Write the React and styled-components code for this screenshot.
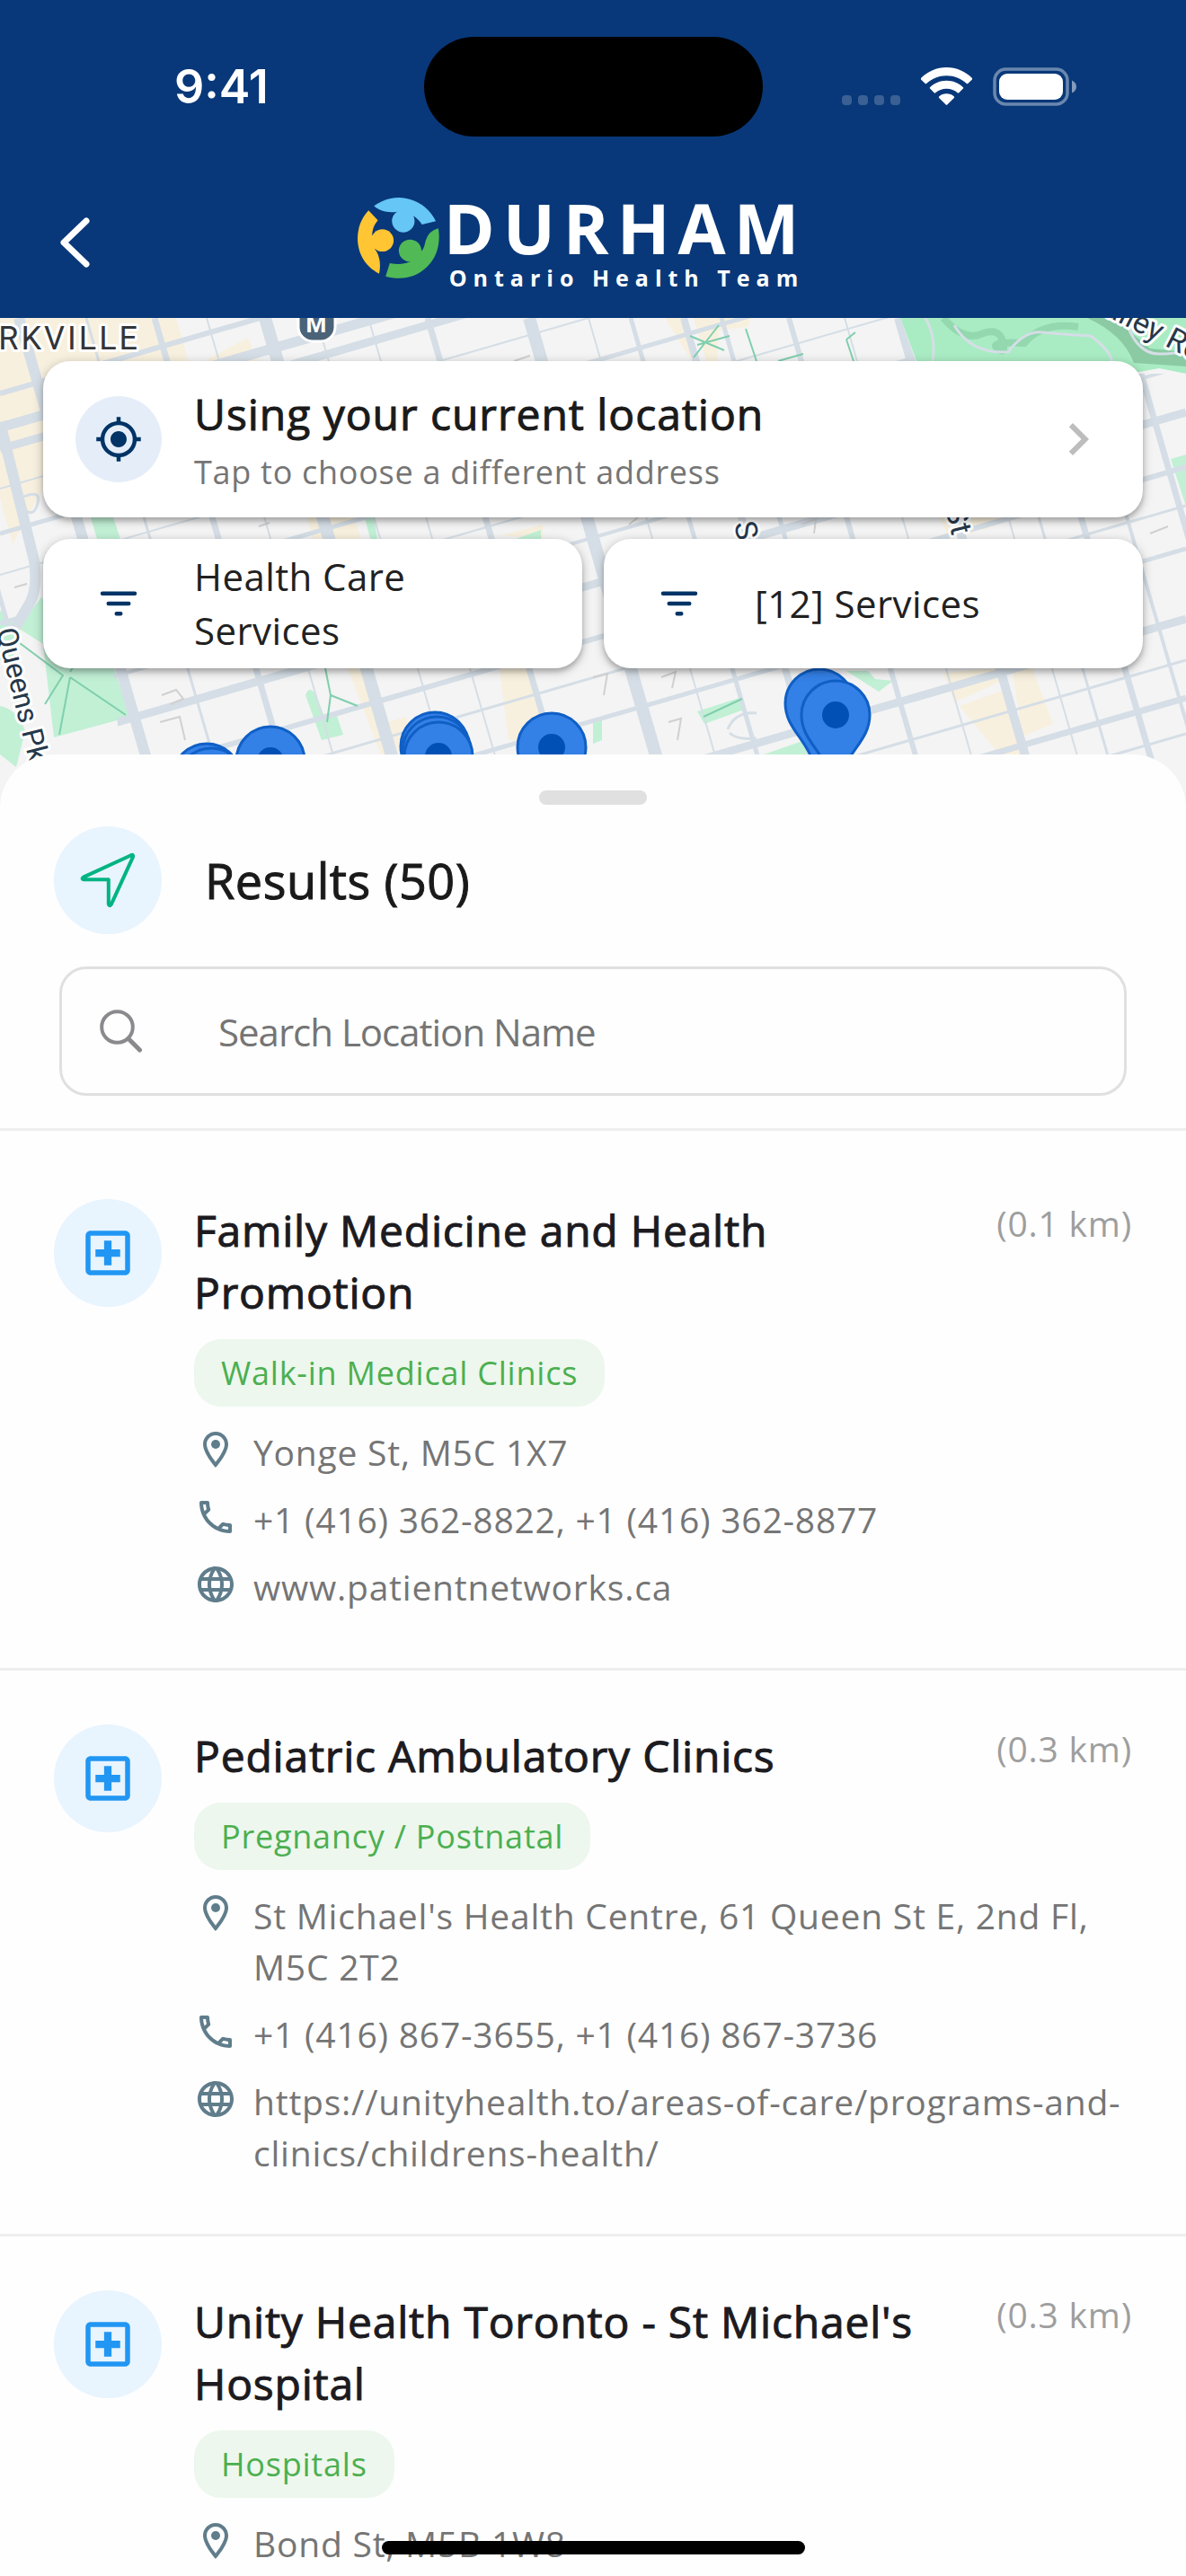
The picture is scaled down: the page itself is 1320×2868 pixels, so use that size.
import React from 'react';
import styled, { createGlobalStyle } from 'styled-components';
import {
  MdChevronRight,
  MdLanguage,
  MdMyLocation,
  MdOutlineLocalHospital,
  MdOutlineLocalPhone,
  MdOutlineLocationOn,
} from 'react-icons/md';

const GlobalStyle = createGlobalStyle`
  * {
    box-sizing: border-box;
  }

  body {
    margin: 0;
    font-family: 'Open Sans', 'Noto Sans', sans-serif;
    font-size: 39px;
    letter-spacing: 0.02em;
    color: #1c1b1f;
    background: #fefefe;
  }

  button,
  input {
    font: inherit;
    letter-spacing: inherit;
    color: inherit;
    border: 0;
    padding: 0;
    background: none;
  }

  h1,
  h2,
  h3,
  p,
  ul {
    margin: 0;
    padding: 0;
    list-style: none;
    font-weight: 400;
  }

  a {
    color: inherit;
    text-decoration: none;
  }

  svg {
    display: block;
    flex-shrink: 0;
  }
`;

const Screen = styled.div`
  height: 100vh;
  overflow: hidden;
  display: flex;
  flex-direction: column;
`;

/* header */

const Header = styled.header`
  flex-shrink: 0;
  background: #083879;
  color: #ffffff;
`;

const StatusBar = styled.div`
  display: grid;
  grid-template-columns: 1fr auto 1fr;
  align-items: center;
  padding: 41px 0 34px;
`;

const Clock = styled.time`
  padding-left: 194px;
  font-family: Inter, sans-serif;
  font-size: 52px;
  font-weight: 600;
  letter-spacing: 0;
`;

const Island = styled.div`
  width: 377px;
  height: 111px;
  border-radius: 56px;
  background: #000000;
`;

const StatusIcons = styled.div`
  display: flex;
  justify-content: flex-end;
  gap: 23px;
  padding-right: 122px;
`;

const NavBar = styled.div`
  display: flex;
  align-items: flex-start;
  height: 168px;
  padding: 33px 60px 0;
`;

const BackButton = styled.button`
  display: flex;
  align-items: center;
  width: 60px;
  height: 102px;
`;

const Brand = styled.div`
  flex: 1;
  display: flex;
  justify-content: center;
  gap: 5px;
`;

const BrandText = styled.div`
  padding-top: 5px;
  font-weight: 700;
`;

const BrandName = styled.h1`
  font-size: 77px;
  line-height: 60px;
  font-weight: 700;
  letter-spacing: 9px;
`;

const BrandTagline = styled.p`
  margin-top: 8px;
  padding-left: 6px;
  font-size: 25px;
  line-height: 34px;
  font-weight: 700;
  letter-spacing: 7px;
`;

const NavSpacer = styled.div`
  width: 84px;
`;

/* map */

const MapArea = styled.section`
  position: relative;
  flex-shrink: 0;
  height: 546px;
  overflow: hidden;
  background: #f4f4f4;
`;

const MapCanvas = styled.svg`
  position: absolute;
  inset: 0;
  width: 100%;
  height: 100%;
`;

const MapControls = styled.div`
  position: relative;
  display: grid;
  grid-template-columns: 1fr 1fr;
  gap: 24px;
  padding: 48px;
`;

const MapCard = styled.button`
  display: flex;
  align-items: center;
  gap: 36px;
  height: ${({ $wide }) => ($wide ? 174 : 144)}px;
  grid-column: ${({ $wide }) => ($wide ? '1 / -1' : 'auto')};
  padding: 0 36px;
  border-radius: 30px;
  background: #ffffff;
  text-align: left;
  box-shadow: 0 3px 12px rgba(0, 0, 0, 0.28), 0 4px 5px rgba(0, 0, 0, 0.14);
`;

const CardIcon = styled.span`
  display: flex;
  align-items: center;
  justify-content: center;
  flex-shrink: 0;
  width: 96px;
  height: 96px;
  border-radius: 50%;
  color: #003366;
  background: ${({ $filled }) => ($filled ? '#e5eef8' : 'transparent')};
`;

const CardText = styled.span`
  flex: 1;
  font-size: 42px;
  line-height: 60px;
  letter-spacing: 0.01em;
  color: #212121;
`;

const CardTitle = styled.strong`
  display: block;
  font-size: 48px;
  line-height: 72px;
  font-weight: 400;
  letter-spacing: 0.02em;
  color: #1a1a1a;
  -webkit-text-stroke: 1px currentColor;
`;

const CardHint = styled.span`
  display: block;
  font-size: 36px;
  line-height: 57px;
  letter-spacing: 0.02em;
  color: #757575;
`;

/* results sheet */

const Sheet = styled.main`
  position: relative;
  flex-shrink: 0;
  margin-top: -60px;
  padding-top: 40px;
  border-radius: 60px 60px 0 0;
  background: #fefefe;
`;

const Handle = styled.div`
  width: 120px;
  height: 16px;
  margin: 0 auto 24px;
  border-radius: 8px;
  background: #e0e0e0;
`;

const SheetHeader = styled.div`
  display: flex;
  align-items: center;
  gap: 48px;
  padding: 0 60px;
`;

const RoundIcon = styled.span`
  display: flex;
  align-items: center;
  justify-content: center;
  flex-shrink: 0;
  width: 120px;
  height: 120px;
  border-radius: 50%;
  color: #2196f3;
  background: #e8f4fe;
`;

const SheetTitle = styled.h2`
  font-size: 54px;
  letter-spacing: 0.01em;
  color: #1a1a1a;
  -webkit-text-stroke: 1px currentColor;
`;

const SearchBox = styled.label`
  display: flex;
  align-items: center;
  gap: 84px;
  height: 144px;
  margin: 36px 66px;
  padding: 0 42px;
  border: 3px solid #e0e0e0;
  border-radius: 30px;
`;

const SearchInput = styled.input`
  flex: 1;
  min-width: 0;
  font-size: 42px;
  letter-spacing: -1px;
  outline: none;

  &::placeholder {
    color: #757575;
    opacity: 1;
  }
`;

const ResultList = styled.ul`
  padding-top: 16px;
  border-top: 3px solid #eeeeee;
`;

const ResultItem = styled.li`
  display: flex;
  gap: 36px;
  padding: 60px 60px 62px;
  border-bottom: 3px solid #eeeeee;
`;

const ResultBody = styled.div`
  flex: 1;
  min-width: 0;
`;

const ResultHead = styled.div`
  display: flex;
  justify-content: space-between;
  gap: 24px;
`;

const ResultName = styled.h3`
  font-size: 48px;
  line-height: 69px;
  -webkit-text-stroke: 1px currentColor;
`;

const Distance = styled.span`
  white-space: nowrap;
  line-height: 54px;
  color: #9e9e9e;
`;

const Tag = styled.span`
  display: block;
  width: fit-content;
  margin: 18px 0 22px;
  padding: 0 30px;
  border-radius: 30px;
  font-size: 36px;
  line-height: 75px;
  color: #4caf50;
  background: #edf7ed;
`;

const Details = styled.div`
  display: flex;
  flex-direction: column;
  gap: 18px;
`;

const DetailRow = styled.div`
  display: flex;
  gap: 18px;
  line-height: 57px;
  color: #757575;

  svg {
    margin-top: 2px;
    color: #607d8b;
  }
`;

const HomeIndicator = styled.div`
  position: fixed;
  left: 0;
  right: 0;
  bottom: 24px;
  width: 471px;
  height: 15px;
  margin: 0 auto;
  border-radius: 8px;
  background: #000000;
`;

/* roads are given by where they cross the top (avenues) or left (streets) edge */
const avenues = [
  [-90, 5], [21, 12], [96, 3], [172, 7], [230, 2], [295, 14], [352, 2],
  [410, 2], [476, 7], [589, 14], [655, 2], [702, 5], [761, 8],
  [803, 5], [878, 6], [940, 2], [1000, 10], [1058, 2], [1092, 3], [1139, 7],
  [1190, 4], [1252, 7],
];

const streets = [
  [84, 6], [122, 11], [146, 9], [190, 2], [240, 5], [286, 2],
  [340, 5], [390, 2], [436, 4], [488, 9], [549, 6], [592, 3],
  [640, 5], [718, 9], [764, 3], [806, 7], [846, 3],
];

const pins = [
  [230, 512], [235, 517], [301, 493], [484, 477], [486, 482], [488, 488],
  [614, 478], [912, 429], [930, 442],
];

const results = [
  {
    name: 'Family Medicine and Health Promotion',
    distance: '(0.1 km)',
    tag: 'Walk-in Medical Clinics',
    address: 'Yonge St, M5C 1X7',
    phone: '+1 (416) 362-8822, +1 (416) 362-8877',
    website: 'www.patientnetworks.ca',
    href: 'http://www.patientnetworks.ca',
  },
  {
    name: 'Pediatric Ambulatory Clinics',
    distance: '(0.3 km)',
    tag: 'Pregnancy / Postnatal',
    address: "St Michael's Health Centre, 61 Queen St E, 2nd Fl, M5C 2T2",
    phone: '+1 (416) 867-3655, +1 (416) 867-3736',
    website:
      'https://unityhealth.to/areas-of-care/programs-and-clinics/childrens-health/',
    href: 'https://unityhealth.to/areas-of-care/programs-and-clinics/childrens-health/',
  },
  {
    name: "Unity Health Toronto - St Michael's Hospital",
    distance: '(0.3 km)',
    tag: 'Hospitals',
    address: 'Bond St, M5B 1W8',
  },
];

function SignalIcon() {
  return (
    <svg width="65" height="43" viewBox="0 0 65 43" fill="#fff" opacity="0.2">
      {[0, 18, 36, 54].map((x) => (
        <rect key={x} x={x} y="31" width="11" height="11" rx="4" />
      ))}
    </svg>
  );
}

function WifiIcon() {
  return (
    <svg width="57" height="43" viewBox="0 0 57 43" fill="#fff">
      <path d="M28.5 0C39.500 0 49.500 4.500 57 12Q57.600 12.800 57 13.500L52.300 18Q51.500 18.600 50.800 18C44.500 12.500 36.800 9.200 28.500 9.200S12.500 12.500 6.200 18Q5.500 18.600 4.700 18L0 13.500Q-.6 12.800 0 12C7.500 4.500 17.500 0 28.500 0Z" />
      <path d="M28.500 14.800C35.500 14.800 42 17.500 47 22.200Q47.600 23 47 23.600L42.300 28.300Q41.500 29 40.700 28.300C37.300 25.400 33.100 23.800 28.500 23.800S19.700 25.400 16.300 28.300Q15.500 29 14.700 28.300L10 23.600Q9.400 23 10 22.200C15 17.500 21.500 14.800 28.500 14.800Z" />
      <path d="M28.500 29.200C31.700 29.200 34.600 30.400 36.900 32.400Q37.500 33.200 36.900 33.900L29.300 41.600Q28.500 42.300 27.700 41.600L20.100 33.900Q19.500 33.200 20.100 32.400C22.400 30.400 25.300 29.200 28.500 29.200Z" />
    </svg>
  );
}

function BatteryIcon() {
  return (
    <svg width="93" height="43" viewBox="0 0 93 43" fill="#fff">
      <rect
        x="2"
        y="2"
        width="81"
        height="39"
        rx="12.500"
        fill="none"
        stroke="#fff"
        strokeWidth="3.500"
        opacity="0.4"
      />
      <rect x="7" y="7" width="71" height="29" rx="9" />
      <path d="M88 14.500Q93 17 93 21.500T88 28.500Z" opacity="0.5" />
    </svg>
  );
}

function Emblem() {
  return (
    <svg
      width="91"
      height="91"
      viewBox="104 57 254 273"
      preserveAspectRatio="none"
    >
      <g fill="#66c6f5">
        <path d="M155 88A127 136 0 0 1 347 139L304 150C298 139 288 130 278 121L280 142 213 142C209 127 217 113 229 107C202 112 173 107 155 88Z" />
        <ellipse cx="246" cy="139" rx="35" ry="37" />
      </g>
      <g fill="#ffc533">
        <path d="M138 103L167 136C156 150 149 167 149 186L190 203 157 231C173 252 177 284 171 314C124 288 104 242 104 195C104 160 118 125 138 103Z" />
        <ellipse cx="181" cy="203" rx="35" ry="37" />
      </g>
      <g fill="#51b956">
        <path d="M355 163C362 210 352 258 320 291C284 329 238 337 191 323L204 279C226 284 248 284 267 274L268 225 303 238C314 225 312 209 318 197C324 180 338 167 355 163Z" />
        <ellipse cx="267" cy="237" rx="35" ry="37" />
      </g>
    </svg>
  );
}

function FilterIcon() {
  return (
    <svg
      width="54"
      height="54"
      viewBox="0 0 24 24"
      stroke="currentColor"
      strokeWidth="2"
      strokeLinecap="round"
    >
      <path d="M4 7H20M7 12H17M11 17H13" />
    </svg>
  );
}

function SendIcon() {
  return (
    <svg
      width="60"
      height="60"
      viewBox="0 0 60 60"
      fill="none"
      stroke="#00b482"
      strokeWidth="4"
      strokeLinejoin="round"
      overflow="visible"
    >
      <path d="M2.800 26.600L55.800 2.200Q58.600 1 58 4.200L33.800 56.800Q31.600 59.800 30.800 56.500V29.200H3.200Q.2 28.400 2.800 26.600Z" />
    </svg>
  );
}

function SearchIcon() {
  return (
    <svg
      width="48"
      height="48"
      viewBox="0 0 48 48"
      fill="none"
      stroke="#8a8a8e"
      strokeLinecap="round"
    >
      <circle cx="19.500" cy="19.500" r="17.300" strokeWidth="4" />
      <path d="M32 32.500L44.500 45" strokeWidth="5" />
    </svg>
  );
}

function CityMap() {
  return (
    <MapCanvas viewBox="0 0 1320 546" preserveAspectRatio="xMidYMin slice">
      <g fill="#f8f0de">
        <path d="M0 0H196L212 56 276 22 292 60H96L48 84V190L14 252 0 200Z" />
        <path d="M342 222H372L384 246H348ZM372 222H394L402 246H380Z" />
        <path d="M387 390H412L434 462 440 486H424ZM432 450L452 444 460 486H444Z" />
        <path d="M556 390L588 386 614 474 566 470Z" />
        <path d="M740 0H760L770 48H786L772 0H836L832 10 800 14 798 48H770Z" />
        <path d="M1050 395L1112 390 1116 404 1062 428ZM1068 432L1118 414 1140 486H1112ZM1126 388H1148L1172 452 1138 466Z" />
        <path d="M1046 222H1118L1106 232 1056 246ZM558 242L604 230V246Z" />
      </g>
      <g fill="#c1f0d5">
        <path d="M46 311L20 345 48 363 60 467 145 444 126 388Z" />
        <path d="M0 325L24 350 10 390 0 380ZM0 432Q20 436 28 460L18 500 0 486Z" />
        <path d="M101 222H126L134 246H108ZM406 222H416L420 246H412ZM574 246L602 236V246Z" />
        <path d="M340 420Q344 408 352 420L362 446 374 440 382 464 358 470Z" />
        <path d="M776 438L826 422 828 436 784 452ZM942 393H966L974 402 994 404 978 416Z" />
        <path d="M850 486L896 470 908 486ZM1303 157L1320 152V210ZM660 450L670 446V470L660 474Z" />
      </g>
      <path d="M1002 0L1020 48 1268 60 1290 56 1320 62V0Z" fill="#a9ecc3" />
      <path
        d="M1050 0Q1072 26 1092 18T1116 26 1110 34 1140 28Q1160 4 1200 10"
        fill="none"
        stroke="#93d8ae"
        strokeWidth="8"
      />
      <path
        d="M1210 0Q1250 18 1262 50L1320 54V38L1280 34 1240 0Z"
        fill="#8bcaa2"
      />
      <g stroke="#d5dee6" fill="none">
        {streets.map(([y, width]) => (
          <path
            key={y}
            d={`M0 ${y}L1320 ${y - 383}`}
            strokeWidth={width}
            clipPath="url(#city)"
          />
        ))}
        {avenues.map(([x, width]) => (
          <path
            key={x}
            d={`M${x} 0L${x + 158} 546`}
            strokeWidth={width}
            clipPath="url(#city)"
          />
        ))}
        <path d="M0 116L38 270Q42 300 34 316L14 350" strokeWidth="12" />
        <path d="M1030 0Q1042 20 1038 48M1062 8Q1080 40 1122 38 1140 14 1160 16T1214 20Q1236 36 1238 50M1252 0Q1264 40 1290 40T1320 34" strokeWidth="3" />
        <path d="M24 200Q46 190 42 206T28 214M810 458Q818 438 842 440M812 462Q820 470 842 468" strokeWidth="3" />
      </g>
      <clipPath id="city">
        <path d="M0 0H1002L1020 50 1268 62 1320 62V546H138L126 388 46 311 0 366Z" />
      </clipPath>
      <g fill="none" stroke="#7fcfae" strokeWidth="2">
        <path d="M22 362L70 398 50 430M78 400L66 464M78 400L140 442M78 394L96 366" />
        <path d="M768 20L806 36M776 30L812 20M772 44L800 8M830 12L842 48M942 24L952 16M942 24L950 48M362 390L368 420 364 450M368 420L398 432M783 444L826 424M866 48L894 40" />
      </g>
      <g fill="none" stroke="#d0d0d0" strokeWidth="2">
        <path d="M180 420L196 414 204 424 190 430M178 450L200 444 206 470M736 400L752 394 748 412M744 450L758 446 754 470M572 48L590 42M892 230L908 224 906 240M660 400L676 396 672 420M288 232L300 228M1280 240L1300 232M16 300L30 296M700 230L710 222" />
      </g>

      <g
        fontFamily="Roboto, sans-serif"
        fontSize="34"
        fill="#26384a"
        stroke="#ffffff"
        strokeWidth="6"
        strokeLinejoin="round"
        paintOrder="stroke"
      >
        <text
          x="156"
          y="35"
          textAnchor="end"
          fontSize="36"
          fill="#333538"
          letterSpacing="3"
        >
          YORKVILLE
        </text>
        <text
          transform="translate(-4 348) rotate(76)"
          fontSize="32"
          letterSpacing="0"
        >
          Queens Pk
        </text>
        <text transform="translate(817 229) rotate(78)">S</text>
        <text transform="translate(1052 212) rotate(76)">St</text>
        <text transform="translate(1208 -14) rotate(27)" letterSpacing="0">
          Valley Road
        </text>
      </g>

      <rect
        x="332"
        y="-16"
        width="41"
        height="42"
        rx="16"
        fill="#4b6378"
        stroke="#ffffff"
        strokeWidth="3"
      />
      <text
        x="352"
        y="16"
        textAnchor="middle"
        fontFamily="Roboto, sans-serif"
        fontSize="26"
        fontWeight="700"
        letterSpacing="0"
        fill="#ffffff"
      >
        M
      </text>

      {pins.map(([x, y]) => (
        <g key={x} transform={`translate(${x} ${y})`}>
          <path
            d="M-38 0A38 38 0 0 1 38 0C38 24 20 36 10 58Q4 72 0 88Q-4 72 -10 58C-20 36 -38 24 -38 0Z"
            fill="#3380e6"
            stroke="#0f5fc6"
            strokeWidth="3"
          />
          <circle r="15" fill="#0050b5" />
        </g>
      ))}
    </MapCanvas>
  );
}

function Result({ item }) {
  return (
    <ResultItem>
      <RoundIcon>
        <MdOutlineLocalHospital size={66} />
      </RoundIcon>
      <ResultBody>
        <ResultHead>
          <ResultName>{item.name}</ResultName>
          <Distance>{item.distance}</Distance>
        </ResultHead>
        <Tag>{item.tag}</Tag>
        <Details>
          <DetailRow>
            <MdOutlineLocationOn size={48} />
            <span>{item.address}</span>
          </DetailRow>
          {item.phone && (
            <DetailRow>
              <MdOutlineLocalPhone size={48} />
              <span>{item.phone}</span>
            </DetailRow>
          )}
          {item.website && (
            <DetailRow>
              <MdLanguage size={48} />
              <a href={item.href}>{item.website}</a>
            </DetailRow>
          )}
        </Details>
      </ResultBody>
    </ResultItem>
  );
}

function App() {
  return (
    <Screen>
      <GlobalStyle />
      <Header>
        <StatusBar>
          <Clock>9:41</Clock>
          <Island />
          <StatusIcons>
            <SignalIcon />
            <WifiIcon />
            <BatteryIcon />
          </StatusIcons>
        </StatusBar>
        <NavBar>
          <BackButton type="button" aria-label="Back">
            <svg
              width="48"
              height="60"
              viewBox="0 0 48 60"
              fill="none"
              stroke="#fff"
              strokeWidth="7"
              strokeLinecap="round"
              strokeLinejoin="round"
            >
              <path d="M36 6L11 30L36 54" />
            </svg>
          </BackButton>
          <Brand>
            <Emblem />
            <BrandText>
              <BrandName>DURHAM</BrandName>
              <BrandTagline>Ontario Health Team</BrandTagline>
            </BrandText>
          </Brand>
          <NavSpacer />
        </NavBar>
      </Header>

      <MapArea>
        <CityMap />
        <MapControls>
          <MapCard type="button" $wide>
            <CardIcon $filled>
              <MdMyLocation size={54} />
            </CardIcon>
            <CardText>
              <CardTitle>Using your current location</CardTitle>
              <CardHint>Tap to choose a different address</CardHint>
            </CardText>
            <MdChevronRight size={72} color="#bdbdbd" />
          </MapCard>
          <MapCard type="button">
            <CardIcon>
              <FilterIcon />
            </CardIcon>
            <CardText>Health Care Services</CardText>
          </MapCard>
          <MapCard type="button">
            <CardIcon>
              <FilterIcon />
            </CardIcon>
            <CardText>[12] Services</CardText>
          </MapCard>
        </MapControls>
      </MapArea>

      <Sheet>
        <Handle />
        <SheetHeader>
          <RoundIcon>
            <SendIcon />
          </RoundIcon>
          <SheetTitle>Results (50)</SheetTitle>
        </SheetHeader>
        <SearchBox>
          <SearchIcon />
          <SearchInput
            type="text"
            placeholder="Search Location Name"
            aria-label="Search Location Name"
          />
        </SearchBox>
        <ResultList>
          {results.map((item) => (
            <Result key={item.name} item={item} />
          ))}
        </ResultList>
      </Sheet>
      <HomeIndicator />
    </Screen>
  );
}

export default App;
